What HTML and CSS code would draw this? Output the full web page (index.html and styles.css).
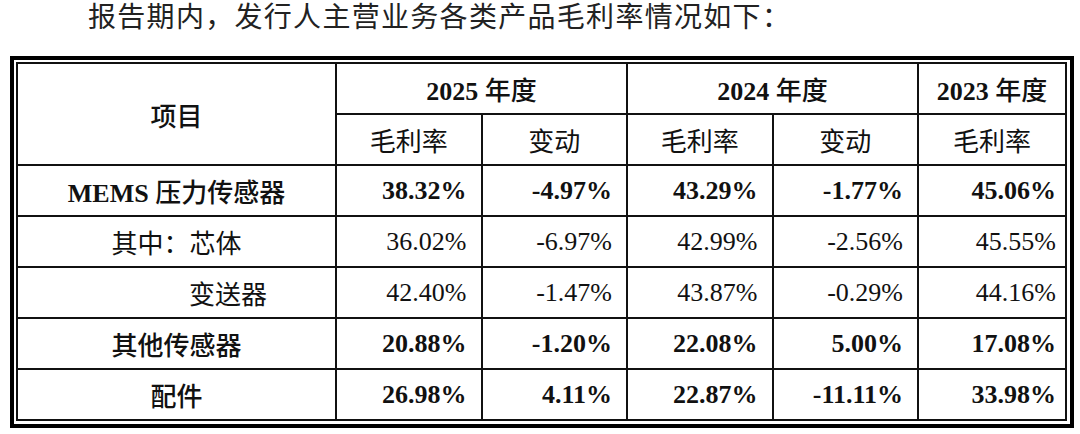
FILE: index.html
```html
<!DOCTYPE html>
<html lang="zh-CN">
<head>
<meta charset="utf-8">
<title>毛利率情况</title>
<link rel="stylesheet" href="styles.css">
</head>
<body>
<p class="intro">报告期内，发行人主营业务各类产品毛利率情况如下：</p>
<div class="frame">
  <table class="grid">
    <colgroup>
      <col class="c-item">
      <col class="c-num">
      <col class="c-num">
      <col class="c-num">
      <col class="c-num">
      <col class="c-last">
    </colgroup>
    <thead>
      <tr>
        <th rowspan="2" class="hd">项目</th>
        <th colspan="2" class="hd"><span class="lat">2025</span> 年度</th>
        <th colspan="2" class="hd"><span class="lat">2024</span> 年度</th>
        <th class="hd"><span class="lat">2023</span> 年度</th>
      </tr>
      <tr>
        <th class="sub">毛利率</th>
        <th class="sub">变动</th>
        <th class="sub">毛利率</th>
        <th class="sub">变动</th>
        <th class="sub">毛利率</th>
      </tr>
    </thead>
    <tbody>
      <tr class="strong">
        <td class="label"><span class="lat">MEMS</span> 压力传感器</td>
        <td class="num">38.32%</td>
        <td class="num">-4.97%</td>
        <td class="num">43.29%</td>
        <td class="num">-1.77%</td>
        <td class="num last">45.06%</td>
      </tr>
      <tr>
        <td class="label">其中：芯体</td>
        <td class="num">36.02%</td>
        <td class="num">-6.97%</td>
        <td class="num">42.99%</td>
        <td class="num">-2.56%</td>
        <td class="num last">45.55%</td>
      </tr>
      <tr>
        <td class="label indent">变送器</td>
        <td class="num">42.40%</td>
        <td class="num">-1.47%</td>
        <td class="num">43.87%</td>
        <td class="num">-0.29%</td>
        <td class="num last">44.16%</td>
      </tr>
      <tr class="strong">
        <td class="label">其他传感器</td>
        <td class="num">20.88%</td>
        <td class="num">-1.20%</td>
        <td class="num">22.08%</td>
        <td class="num">5.00%</td>
        <td class="num last">17.08%</td>
      </tr>
      <tr class="strong">
        <td class="label">配件</td>
        <td class="num">26.98%</td>
        <td class="num">4.11%</td>
        <td class="num">22.87%</td>
        <td class="num">-11.11%</td>
        <td class="num last">33.98%</td>
      </tr>
    </tbody>
  </table>
</div>
</body>
</html>
```

FILE: styles.css
```css
html, body {
  margin: 0;
  padding: 0;
  background: #ffffff;
}

body {
  width: 1080px;
  height: 434px;
  overflow: hidden;
  font-family: "Liberation Serif", "Noto Sans CJK SC", serif;
  color: #111111;
}

.intro {
  margin: 0;
  height: 56px;
  padding-left: 88px;
  font-size: 28px;
  line-height: 36px;
  letter-spacing: 1.3px;
  color: #222222;
  box-sizing: border-box;
}

.frame {
  margin-left: 10px;
  width: 1064px;
  box-sizing: border-box;
  border: 4px solid #000000;
  padding: 2px 3px 3px 2px;
  background: #ffffff;
}

.grid {
  width: 100%;
  border-collapse: collapse;
  table-layout: fixed;
  border: 2px solid #111111;
}

.c-item { width: 319px; }
.c-num { width: 145.5px; }
.c-last { width: auto; }

.grid th,
.grid td {
  border: 2px solid #111111;
  height: 49px;
  padding: 0;
  font-size: 26px;
  vertical-align: middle;
}

.grid th {
  text-align: center;
}

.hd {
  font-weight: 500;
}

.sub {
  font-weight: 400;
}

.lat {
  font-family: "Liberation Serif", serif;
  font-weight: 700;
}

.label {
  text-align: center;
  font-weight: 400;
}

.indent {
  text-align: left;
  padding-left: 171px !important;
}

.num {
  text-align: right;
  padding-right: 14px !important;
  font-weight: 400;
}

.num.last {
  padding-right: 9px !important;
}

.strong .label {
  font-weight: 500;
}

.strong .num {
  font-weight: 700;
}
```
